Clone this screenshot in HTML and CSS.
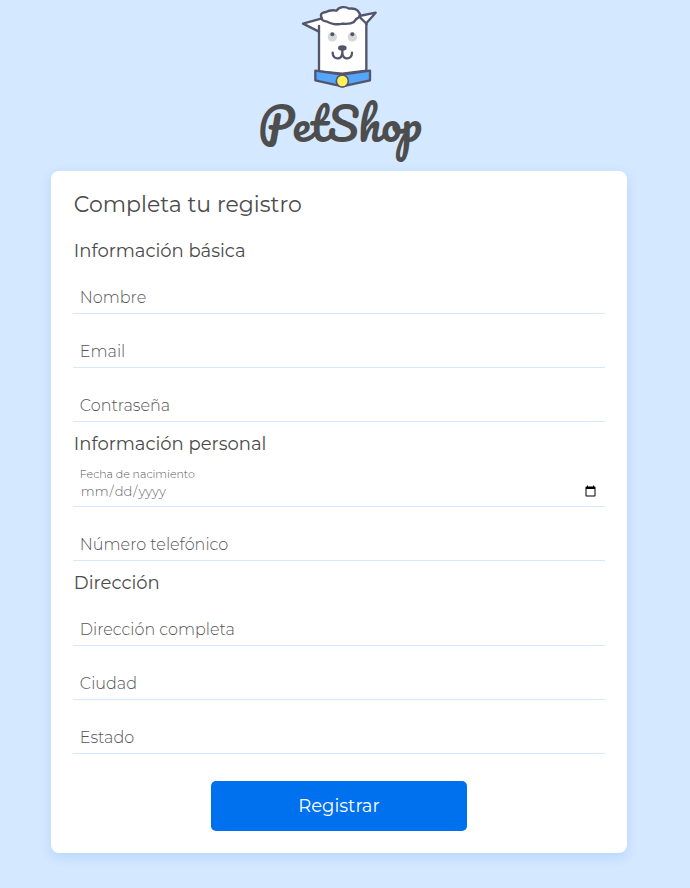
FILE: index.html
```html
<!DOCTYPE html>
<html lang="es">
<head>
  <meta charset="utf-8">
  <meta name="viewport" content="width=device-width, initial-scale=1">
  <title>PetShop</title>
  <link rel="stylesheet" href="styles.css">
</head>
<body>
  <header class="brand">
    <svg class="brand__icon" viewBox="0 0 300 285" aria-hidden="true">
      <g stroke="#53556d" stroke-width="7" stroke-linejoin="round" stroke-linecap="round" fill="#fff">
        <path d="M96 55 39 71 87 95V214L157 221 229 212V70L257 38 208 48Z"/>
        <path d="M87 95V78M206 48 230 72" fill="none"/>
        <path d="M96 55C88 43 96 37 108 36C118 30 130 30 140 32C147 20 166 18 177 26C190 24 204 28 207 38C214 45 207 49 206 52C197 56 195 61 192 66C181 73 171 72 158 71C142 75 121 72 111 65C100 63 94 60 96 55Z"/>
        <path d="M76 212 157 224 240 212V241L157 259 76 241Z" fill="#55a5fb"/>
        <circle cx="157" cy="243" r="18" fill="#fff05a" stroke-width="5"/>
        <path d="M128 158C128 180 157 181 157 159C157 181 186 180 186 158M157 159V148" fill="none"/>
      </g>
      <g fill="#d8d8d8"><circle cx="127" cy="111" r="14"/><circle cx="187" cy="111" r="14"/></g>
      <g fill="#53556d"><circle cx="127" cy="103" r="6"/><circle cx="187" cy="103" r="6"/><ellipse cx="157" cy="144" rx="13" ry="8"/></g>
    </svg>
    <span class="brand__name">PetShop</span>
  </header>
  <main class="card">
    <form class="form">
      <h1 class="form__title">Completa tu registro</h1>
      <fieldset class="group">
        <legend class="group__title group__title--first">Información básica</legend>
        <div class="field"><input class="field__input" id="nombre" type="text"><label class="field__label" for="nombre">Nombre</label></div>
        <div class="field"><input class="field__input" id="email" type="email"><label class="field__label" for="email">Email</label></div>
        <div class="field"><input class="field__input" id="clave" type="password"><label class="field__label" for="clave">Contraseña</label></div>
      </fieldset>
      <fieldset class="group">
        <legend class="group__title">Información personal</legend>
        <div class="field field--date"><input class="field__input" id="nacimiento" type="date"><label class="field__label" for="nacimiento">Fecha de nacimiento</label></div>
        <div class="field"><input class="field__input" id="telefono" type="tel"><label class="field__label" for="telefono">Número telefónico</label></div>
      </fieldset>
      <fieldset class="group">
        <legend class="group__title">Dirección</legend>
        <div class="field"><input class="field__input" id="direccion" type="text"><label class="field__label" for="direccion">Dirección completa</label></div>
        <div class="field"><input class="field__input" id="ciudad" type="text"><label class="field__label" for="ciudad">Ciudad</label></div>
        <div class="field"><input class="field__input" id="estado" type="text"><label class="field__label" for="estado">Estado</label></div>
      </fieldset>
      <button class="button" type="submit">Registrar</button>
    </form>
  </main>
</body>
</html>
```

FILE: styles.css
```css
* {
  box-sizing: border-box;
}

body {
  margin: 0;
  padding: 0 12px 35px 0;
  background: #d4e8ff;
  color: #4b4b4b;
  font-family: Montserrat, Inter, "Open Sans", sans-serif;
}

.brand {
  display: flex;
  flex-direction: column;
  align-items: center;
  height: 171px;
  padding-left: 2px;
}

.brand__icon {
  width: 100px;
  height: 95px;
}

.brand__name {
  color: #4d4d4d;
  font-family: Pacifico, cursive;
  font-size: 45px;
  font-weight: 400;
  line-height: 56px;
}

.card {
  width: 85%;
  margin: 0 auto;
  padding: 20px 22px 22px;
  border-radius: 8px;
  background: #fff;
  box-shadow: 0 4px 12px rgba(0, 112, 240, 0.15);
}

.form {
  display: flex;
  flex-direction: column;
}

.form__title {
  margin: 0;
  padding-left: 1px;
  font-size: 22px;
  font-weight: 400;
  line-height: 28px;
}

.group {
  min-width: 0;
  margin: 0;
  padding: 0;
  border: 0;
}

.group__title {
  width: 100%;
  height: 31px;
  padding: 12px 0 0 1px;
  font-size: 18px;
  font-weight: 400;
  line-height: 20px;
}

.group__title--first {
  height: 41px;
  padding-top: 22px;
}

.field {
  display: grid;
  height: 54px;
  border-bottom: 1px solid #d4e8ff;
}

.field__input,
.field__label {
  grid-area: 1 / 1;
  padding: 22px 7px 0;
  font-family: inherit;
  font-size: 16px;
  font-weight: 300;
  line-height: 31px;
}

.field__input {
  width: 100%;
  min-width: 0;
  border: 0;
  outline: 0;
  background: transparent;
  color: #4b4b4b;
}

.field__label {
  color: #555;
  pointer-events: none;
}

.field--date .field__input {
  padding-right: 6px;
  font-size: 13px;
  color: #666;
}

.field--date .field__label {
  padding-top: 13px;
  font-size: 11px;
  line-height: 16px;
}

.button {
  align-self: center;
  width: 256px;
  height: 50px;
  margin-top: 27px;
  border: 0;
  border-radius: 5px;
  background: #0071ee;
  color: #fff;
  font-family: inherit;
  font-size: 18px;
  font-weight: 400;
}
```
